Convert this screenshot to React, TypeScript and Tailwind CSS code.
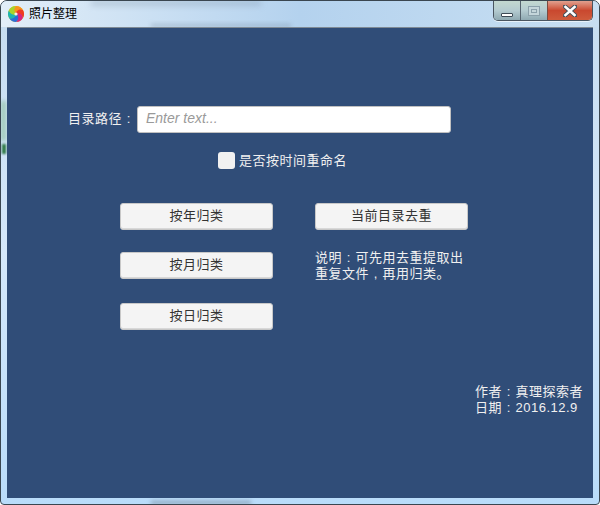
import React from "react";

const cjk = "font-['Liberation_Sans','Noto_Sans_CJK_SC',sans-serif]";

// full-width punctuation sits centred in its cell in this UI
function Wide({ ch }: { ch: string }) {
  return <span className="inline-block w-[13.5px] text-center">{ch}</span>;
}

function UnityButton({ label }: { label: string }) {
  return (
    <button className="flex h-[27px] w-[153px] items-center justify-center rounded-[3px] border border-[#c8c8c8] bg-[#f4f4f4] pb-[2px] text-[13px] tracking-[0.5px] text-[#333] shadow-[inset_0_-1px_0_#d8d8d8]">
      {label}
    </button>
  );
}

function CaptionButtons() {
  return (
    <div className="mr-[6px] flex h-[20px] w-[100px] overflow-hidden rounded-b-[5px] border border-t-0 border-[#4a5560] shadow-[0_1px_0_#e8f2fa]">
      <div className="flex w-[27px] items-end justify-center border-r border-[#55636e] bg-gradient-to-b from-[#c3d8d0] via-[#b4cbd0] to-[#8fa9b2] pb-[3px]">
        <div className="h-[4px] w-[12px] rounded-[1px] border border-[#3d4a55] bg-white" />
      </div>
      <div className="flex w-[26px] items-center justify-center bg-gradient-to-b from-[#c3d8d0] via-[#b4cbd0] to-[#8fa9b2]">
        <div className="flex h-[10px] w-[12px] items-center justify-center border border-[#8ba0aa] bg-[#c4d5da]">
          <div className="h-[4px] w-[6px] border border-[#8ba0aa]" />
        </div>
      </div>
      <div className="flex flex-1 items-center justify-center border-l border-[#7c4a40] bg-gradient-to-b from-[#e0a08f] via-[#c9482f] to-[#cf5b3c]">
        <svg width="14" height="12" viewBox="0 0 14 12">
          <path d="M2 1.5 L12 10.5 M12 1.5 L2 10.5" stroke="#46505a" strokeWidth="4.4" strokeLinecap="square" />
          <path d="M2.5 2 L11.5 10 M11.5 2 L2.5 10" stroke="#ffffff" strokeWidth="2.6" strokeLinecap="square" />
        </svg>
      </div>
    </div>
  );
}

function AppIcon() {
  const blades = [
    [0, "#f7941d"],
    [60, "#ee3a24"],
    [120, "#d6257e"],
    [180, "#2a6fd6"],
    [240, "#1fb5b0"],
    [300, "#a6d52c"],
  ] as const;
  return (
    <svg width="16" height="16" viewBox="0 0 16 16" className="shrink-0">
      <circle cx="8" cy="8" r="8" fill="#f7c51d" />
      {blades.map(([deg, color]) => (
        <path
          key={deg}
          d="M8 8 C5 6.5 5 2 8 0 A8 8 0 0 1 14.93 4 C12 3 9 5 8 8 Z"
          fill={color}
          transform={`rotate(${deg} 8 8)`}
        />
      ))}
      <circle cx="8" cy="8" r="1.6" fill="#f6f2e8" />
    </svg>
  );
}

export default function App() {
  return (
    <div className={`relative flex h-[505px] w-[600px] flex-col overflow-hidden rounded-t-[7px] rounded-b-[4px] border border-[#3a4650] bg-gradient-to-b from-[#c5dcf0] via-[#d5e8fa] to-[#b9dcfa] ${cjk}`}>
      {/* smudges of what is behind the glass frame */}
      <div className="absolute bottom-0 left-[150px] h-[3px] w-[100px] bg-[#55606c]/50 blur-[2px]" />
      <div className="absolute left-0 top-[100px] h-[40px] w-[5px] bg-[#7fb98a]/60 blur-[2px]" />
      <div className="absolute left-[1px] top-[143px] h-[10px] w-[4px] bg-[#1c6b30]/90 blur-[1px]" />

      <div className="relative flex h-[26px] shrink-0 items-start justify-between bg-gradient-to-r from-[#e2eef8] via-[#b4d2ee] to-[#c8dff2]">
        <div className="absolute left-[90px] top-0 h-[4px] w-[170px] bg-[#6f8296]/40 blur-[3px]" />
        <div className="absolute bottom-0 left-[150px] h-[3px] w-[140px] bg-[#6f8296]/40 blur-[2px]" />
        <div className="relative ml-[7px] mt-[5px] flex items-center gap-[5px]">
          <AppIcon />
          <span className="text-[12px] leading-[16px] text-black">照片整理</span>
        </div>
        <CaptionButtons />
      </div>
      <div className="relative mx-[6px] mb-[6px] flex-1 border-t border-t-[#7f8a94] bg-[#304d78] px-[61px] pt-[78px] text-[13px] tracking-[0.5px] text-[#f0f0f0]">
        <div className="flex h-[27px] items-center">
          <span className="w-[69px] shrink-0 whitespace-nowrap pb-[2px]">目录路径<Wide ch=":" /></span>
          <div className="flex h-[27px] w-[314px] items-center rounded-[3px] border border-[#c0c0c0] bg-white pb-[2px] pl-[8px] text-[14px] italic tracking-normal text-[#9a9a9a]">
            Enter text...
          </div>
        </div>
        <div className="ml-[150px] mt-[18px] flex h-[19px] items-center gap-[4px]">
          <div className="h-[17px] w-[17px] rounded-[3px] bg-[#f1f1f1]" />
          <span className="whitespace-nowrap">是否按时间重命名</span>
        </div>
        <div className="ml-[52px] mt-[33px] grid w-[348px] grid-cols-[153px_153px] gap-x-[42px]">
          <div className="flex flex-col">
            <UnityButton label="按年归类" />
            <div className="mt-[22px]"><UnityButton label="按月归类" /></div>
            <div className="mt-[24px]"><UnityButton label="按日归类" /></div>
          </div>
          <div className="flex flex-col">
            <UnityButton label="当前目录去重" />
            <p className="mt-[20px] w-[160px] text-[13px] leading-[16px] tracking-[0.5px]">
              说明<Wide ch=":" />可先用去重提取出
              <br />
              重复文件<Wide ch="," />再用归类。
            </p>
          </div>
        </div>
        <div className="ml-[407px] mt-[54px] w-[120px] whitespace-nowrap leading-[16px]">
          <div>作者<Wide ch=":" />真理探索者</div>
          <div>日期<Wide ch=":" />2016.12.9</div>
        </div>
      </div>
    </div>
  );
}
